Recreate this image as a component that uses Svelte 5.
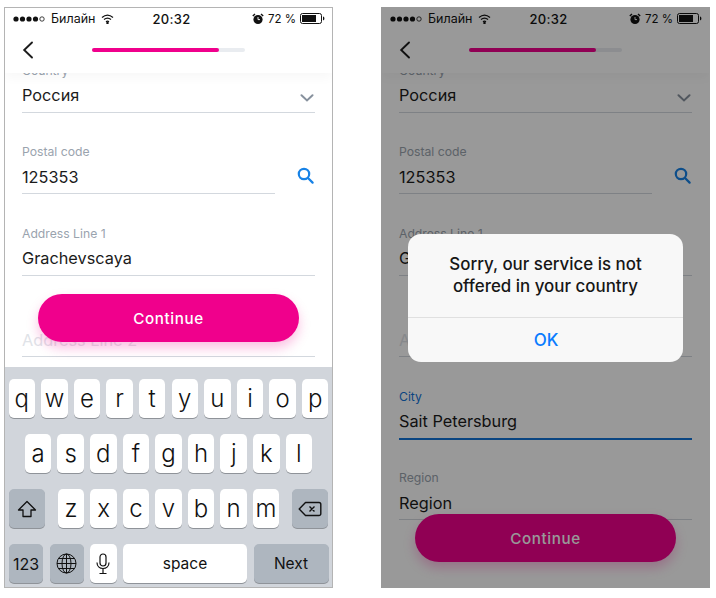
<script>
  const fields = [
    { label: 'Country', value: 'Россия', select: true },
    { label: 'Postal code', value: '125353', search: true },
    { label: 'Address Line 1', value: 'Grachevscaya' },
    { label: '', value: 'Address Line 2', placeholder: true },
    { label: 'City', value: 'Sait Petersburg', focus: true },
    { label: 'Region', value: 'Region' }
  ];
  const row1 = 'qwertyuiop'.split('');
  const row2 = 'asdfghjkl'.split('');
  const row3 = 'zxcvbnm'.split('');
</script>

{#snippet phone(kb)}
  <section class="phone">
    <header class="top">
      <div class="status">
        <div class="st-left">
          <svg class="dots" width="34" height="6" viewBox="0 0 34 6">
            <circle cx="3" cy="3" r="2.6" fill="#111"/><circle cx="9.5" cy="3" r="2.6" fill="#111"/><circle cx="16" cy="3" r="2.6" fill="#111"/><circle cx="22.5" cy="3" r="2.6" fill="#111"/><circle cx="29" cy="3" r="2.2" fill="none" stroke="#111" stroke-width=".8"/>
          </svg>
          <span class="carrier">Билайн</span>
          <svg width="13" height="10" viewBox="0 0 13 10" fill="none" stroke="#111" stroke-width="1.3">
            <path d="M1 3.4C4.4.5 8.6.5 12 3.4"/><path d="M3 5.6c2.2-1.8 4.8-1.8 7 0"/><path d="M5 7.7c1-.8 2-.8 3 0"/><circle cx="6.5" cy="9" r=".6" fill="#111"/>
          </svg>
        </div>
        <span class="time">20:32</span>
        <div class="st-right">
          <svg width="12" height="12" viewBox="0 0 12 12">
            <circle cx="6" cy="6.5" r="4.6" fill="#111"/><path d="M6 4v2.6h2" fill="none" stroke="#fff" stroke-width=".9"/><path d="M.8 3 3 1M11.2 3 9 1" stroke="#111" stroke-width="1.4"/>
          </svg>
          <span class="pct">72 %</span>
          <svg width="25" height="11" viewBox="0 0 25 11">
            <rect x=".5" y=".5" width="21" height="10" rx="2" fill="none" stroke="#111"/><rect x="2" y="2" width="14" height="7" fill="#111"/><path d="M23 3.6c1 .3 1.4 1 1.4 1.9s-.4 1.6-1.4 1.9z" fill="#111"/>
          </svg>
        </div>
      </div>
      <nav class="nav">
        <svg class="back" width="12" height="18" viewBox="0 0 12 18" fill="none" stroke="#1c1c1c" stroke-width="1.9" stroke-linecap="round">
          <path d="M10 1.5 2.2 9l7.8 7.5"/>
        </svg>
        <div class="track"><div class="fill"></div></div>
      </nav>
    </header>

    <div class="content">
      <form class="form">
        {#each fields as f}
          <div class="field" class:focus={f.focus}>
            <div class="label">{f.label}&nbsp;</div>
            <div class="rowline">
              <div class="input" class:ph={f.placeholder} class:short={f.search}>
                <span>{f.value}</span>
                {#if f.select}
                  <svg class="chev" width="14" height="8" viewBox="0 0 14 8" fill="none" stroke="#87919d" stroke-width="2" stroke-linecap="round"><path d="M1.5 1.2 7 6.4l5.5-5.2"/></svg>
                {/if}
              </div>
              {#if f.search}
                <svg class="search" width="17" height="17" viewBox="0 0 17 17" fill="none" stroke="#1782e6" stroke-width="2.2" stroke-linecap="round"><circle cx="7" cy="7" r="5.2"/><path d="M11 11l4.6 4.6"/></svg>
              {/if}
            </div>
          </div>
        {/each}
      </form>
      <button class="cta" type="button">Continue</button>
    </div>

    {#if kb}
      <div class="kb">
        <div class="kr">{#each row1 as k}<span class="key">{k}</span>{/each}</div>
        <div class="kr">{#each row2 as k}<span class="key">{k}</span>{/each}</div>
        <div class="kr r3">
          <span class="key fn wide">
            <svg width="20" height="18" viewBox="0 0 20 18" fill="none" stroke="#111" stroke-width="1.3" stroke-linejoin="round"><path d="M10 1.5 1.5 10H6v6.5h8V10h4.500z"/></svg>
          </span>
          <div class="mid">{#each row3 as k}<span class="key">{k}</span>{/each}</div>
          <span class="key fn wide">
            <svg width="24" height="16" viewBox="0 0 24 16" fill="none" stroke="#111" stroke-width="1.4" stroke-linejoin="round"><path d="M7.500 1.500H21a1.800 1.800 0 0 1 1.800 1.800v9.400a1.800 1.800 0 0 1-1.800 1.800H7.500L1.200 8z"/><path d="M11.500 5.500l5 5M16.500 5.500l-5 5"/></svg>
          </span>
        </div>
        <div class="kr r4">
          <span class="key fn small n123">123</span>
          <span class="key fn small">
            <svg width="21" height="21" viewBox="0 0 21 21" fill="none" stroke="#111" stroke-width="1"><circle cx="10.500" cy="10.500" r="9.500"/><ellipse cx="10.500" cy="10.500" rx="4.500" ry="9.500"/><path d="M10.500 1v19M1 10.500h19M2.500 5.500h16M2.500 15.500h16"/></svg>
          </span>
          <span class="key">
            <svg width="14" height="22" viewBox="0 0 14 22" fill="none" stroke="#111" stroke-width="1.200"><rect x="4" y="1" width="6" height="12" rx="3"/><path d="M1 9.500c0 3.500 2.500 6 6 6s6-2.500 6-6M7 15.500V20M3.500 20.500h7"/></svg>
          </span>
          <span class="key space">space</span>
          <span class="key fn next">Next</span>
        </div>
      </div>
    {/if}
  </section>
{/snippet}

<main class="stage">
  {@render phone(true)}
  <div class="dimwrap">
    {@render phone(false)}
    <div class="scrim">
      <div class="alert">
        <p class="msg">Sorry, our service is not offered in your country</p>
        <button class="ok" type="button">OK</button>
      </div>
    </div>
  </div>
</main>

<style>
  :global(body) { margin: 0; background: #fff; }
  .stage {
    display: flex;
    gap: 48px;
    padding: 7px 0 0 4px;
    font-family: Inter, "Liberation Sans", sans-serif;
    color: #1b1b1b;
  }
  .phone {
    width: 329px;
    height: 581px;
    box-sizing: border-box;
    border: 1px solid #b4b4b4;
    background: #fff;
    display: flex;
    flex-direction: column;
    overflow: hidden;
  }
  .dimwrap { position: relative; width: 329px; height: 581px; }
  .dimwrap .phone { border-color: #fff; }
  .scrim {
    position: absolute;
    inset: 0;
    z-index: 3;
    background: rgba(0, 0, 0, 0.4);
    display: flex;
    justify-content: center;
    padding-top: 227px;
    box-sizing: border-box;
  }
  .alert {
    width: 275px;
    height: 128px;
    background: #f8f8f8;
    border-radius: 13px;
    display: flex;
    flex-direction: column;
    align-items: stretch;
  }
  .msg {
    margin: 0;
    height: 84px;
    box-sizing: border-box;
    padding: 19px 30px 0;
    text-align: center;
    font-size: 16.900px;
    font-weight: 500;
    line-height: 22px;
    color: #161616;
    border-bottom: 1px solid #e0e0e0;
  }
  .ok {
    flex: 1;
    border: 0;
    background: none;
    font: 500 17px Inter, sans-serif;
    color: #0a7cff;
    padding: 0 0 0 1px;
  }
  .top {
    flex: none;
    height: 65px;
    background: #fff;
    position: relative;
    z-index: 2;
    box-shadow: 0 5px 10px rgba(0, 0, 0, 0.03);
  }
  .status {
    height: 21px;
    padding: 0 7px 0 7px;
    display: grid;
    grid-template-columns: 1fr auto 1fr;
    align-items: center;
    font-size: 12.500px;
    color: #111;
  }
  .st-left { display: flex; align-items: center; gap: 4px; margin-left: 1px; }
  .carrier { margin-right: 2px; }
  .time { font-weight: 500; font-size: 13px; letter-spacing: 0.3px; margin-left: 6px; }
  .st-right { display: flex; align-items: center; justify-content: flex-end; gap: 4px; }
  .pct { font-size: 11.500px; }
  .nav {
    height: 44px;
    position: relative;
    display: flex;
    align-items: center;
    padding: 0 0 0 17px;
  }
  .back { flex: none; margin-top: -2px; }
  .track {
    width: 153px;
    height: 4px;
    margin-left: 58px;
    margin-top: -3px;
    border-radius: 2px;
    background: #e9ecf0;
  }
  .fill { width: 127px; height: 100%; border-radius: 2px; background: #f0008c; }
  .content {
    flex: 1;
    min-height: 0;
    position: relative;
    overflow: hidden;
  }
  .form { margin-top: -11px; padding: 0 17px; }
  .field { height: 51px; margin-bottom: 30.500px; }
  .label {
    height: 16px;
    font-size: 12.200px;
    line-height: 16px;
    padding-top: 0.500px;
    color: #9aa3ae;
  }
  .focus .label { color: #1273d8; }
  .rowline { display: flex; align-items: flex-start; }
  .input {
    flex: 1;
    height: 34px;
    box-sizing: border-box;
    border-bottom: 1px solid #d3d8de;
    font-size: 16.300px;
    line-height: 22px;
    padding-top: 0;
    color: #1b1b1b;
    display: flex;
    justify-content: space-between;
    align-items: center;
  }
  .input span { display: block; }
  .input.ph { color: #dfe3e8; }
  .input.short { flex: none; width: 253px; }
  .focus .input { border-bottom: 2px solid #1273d8; height: 35px; }
  .chev { margin: 0 2px 0 0; transform: translate(1px, 3px); }
  .search { margin: 7px 1px 0 auto; }
  .cta {
    position: absolute;
    left: 33px;
    bottom: 25px;
    width: 261px;
    height: 48px;
    border: 0;
    border-radius: 24px;
    background: #f0008c;
    color: #fff;
    font: 500 15.200px Inter, sans-serif;
    letter-spacing: 0.6px;
    box-shadow: 0 6px 12px rgba(240, 0, 140, 0.25);
  }
  .kb {
    flex: none;
    height: 220px;
    box-sizing: border-box;
    background: #d1d5db;
    padding: 12px 4px 0;
    display: flex;
    flex-direction: column;
    gap: 16px;
  }
  .kr { display: flex; justify-content: center; gap: 6.100px; height: 39px; }
  .key {
    flex: none;
    width: 26.500px;
    height: 39px;
    background: #fff;
    border-radius: 5px;
    box-shadow: 0 1px 0 #8f9399;
    display: flex;
    align-items: center;
    justify-content: center;
    font-size: 24px;
    font-weight: 300;
    color: #111;
  }
  .r3 { justify-content: space-between; }
  .mid { display: flex; gap: 6px; }
  .fn { background: #aeb6bf; }
  .wide { width: 36px; }
  .r4 { justify-content: flex-start; gap: 6.500px; }
  .small { width: 34px; }
  .n123 { font-size: 16px; font-weight: 400; }
  .space { width: 124px; font-size: 15.500px; font-weight: 400; }
  .next { width: 75px; font-size: 15.500px; font-weight: 400; }
</style>
